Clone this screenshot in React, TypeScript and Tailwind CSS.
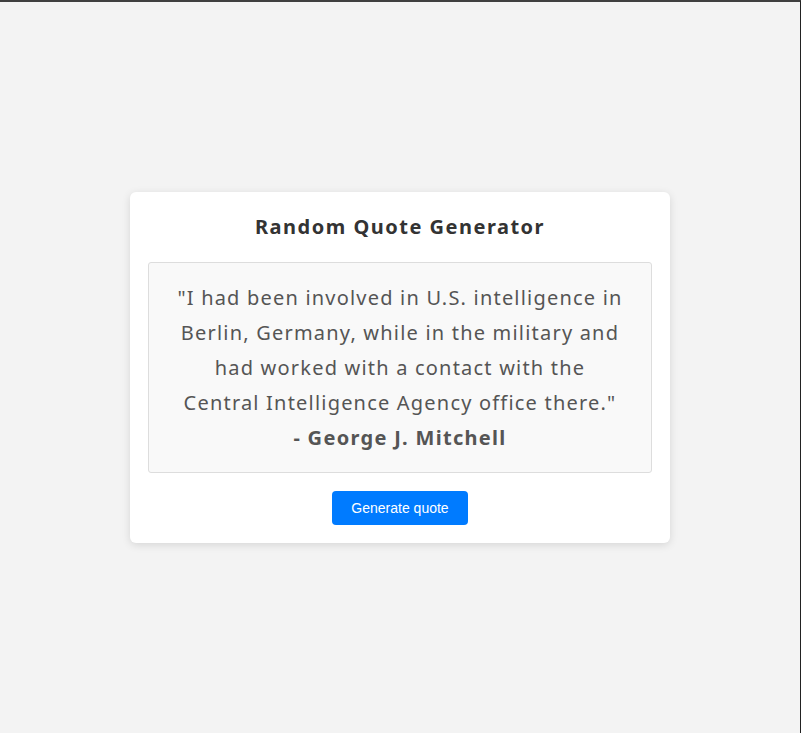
import { useState } from "react";

const quotes = [
  {
    lines: [
      "\"I had been involved in U.S. intelligence in",
      "Berlin, Germany, while in the military and",
      "had worked with a contact with the",
      "Central Intelligence Agency office there.\"",
    ],
    author: "George J. Mitchell",
  },
];

export default function App() {
  const [idx, setIdx] = useState(0);
  const q = quotes[idx];

  return (
    <div
      className="box-border flex h-screen items-center justify-center border-t-2 border-r border-t-[#3f3f3f] border-r-[#222] bg-[#f3f3f3]"
      style={{ fontFamily: '"Noto Sans", "Open Sans", sans-serif' }}
    >
      <div className="w-[540px] rounded-md bg-white px-[18px] pt-5 pb-[18px] text-center shadow-[0_2px_8px_rgba(0,0,0,0.12)]">
        <h1 className="mb-5 text-[20px] leading-[30px] font-bold tracking-[1.5px] text-[#333]">
          Random Quote Generator
        </h1>
        <div className="rounded-[3px] border border-[#ddd] bg-[#f9f9f9] px-2 py-[17px] text-[20px] leading-[35px] tracking-[1.2px] text-[#555]">
          <p className="whitespace-nowrap">
            {q.lines.map((l, i) => (
              <span key={i} className="block">
                {l}
              </span>
            ))}
          </p>
          <p className="font-bold tracking-[1.3px]">- {q.author}</p>
        </div>
        <button
          type="button"
          onClick={() => setIdx((idx + 1) % quotes.length)}
          className="mt-[18px] h-[34px] w-[136px] rounded bg-[#007bff] text-[14px] text-white"
          style={{ fontFamily: '"Liberation Sans", Arial, sans-serif' }}
        >
          Generate quote
        </button>
      </div>
    </div>
  );
}
